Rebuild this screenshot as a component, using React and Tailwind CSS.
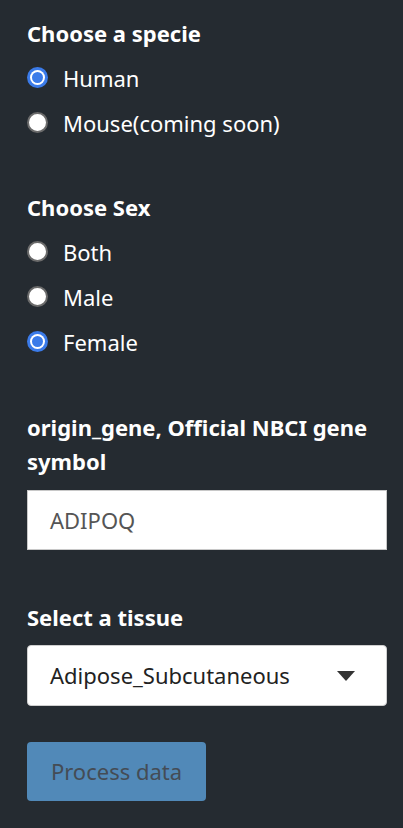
import React from "react";

function Radio({ checked, label }) {
  return (
    <div className="flex items-center h-[45px]">
      {checked ? (
        <span className="w-[21px] h-[21px] rounded-full bg-[#3b7be9] flex items-center justify-center shrink-0">
          <span className="w-[15px] h-[15px] rounded-full bg-white flex items-center justify-center">
            <span className="w-[11px] h-[11px] rounded-full bg-[#3b7be9]" />
          </span>
        </span>
      ) : (
        <span className="w-[21px] h-[21px] rounded-full bg-white border-2 border-[#6b6b6b] shrink-0" />
      )}
      <span className="ml-[15px] text-white text-[22px] leading-none">{label}</span>
    </div>
  );
}

function Header({ children, className = "" }) {
  return (
    <div className={"text-white font-bold text-[22px] leading-[34px] " + className}>{children}</div>
  );
}

export default function App() {
  return (
    <div
      className="w-[403px] min-h-[828px] bg-[#252b31] pl-[27px] pr-[16px] pt-[16px]"
      style={{ fontFamily: "'Noto Sans', 'Liberation Sans', sans-serif" }}
    >
      <Header>Choose a specie</Header>
      <div className="mt-[5px]">
        <Radio checked label="Human" />
        <Radio label="Mouse(coming soon)" />
      </div>
      <Header className="mt-[45px]">Choose Sex</Header>
      <div className="mt-[5px]">
        <Radio label="Both" />
        <Radio label="Male" />
        <Radio checked label="Female" />
      </div>
      <Header className="mt-[46px]">origin_gene, Official NBCI gene symbol</Header>
      <div className="mt-[12px] w-[360px] h-[60px] bg-white border border-[#c8c8c8] flex items-center pl-[22px] text-[22px] text-[#555555]">
        ADIPOQ
      </div>
      <Header className="mt-[50px]">Select a tissue</Header>
      <div className="mt-[11px] w-[360px] h-[61px] bg-white border border-[#cfcfcf] rounded-[4px] flex items-center justify-between pl-[22px] pr-[31px] text-[22px] text-[#222222]">
        <span>Adipose_Subcutaneous</span>
        <svg width="18" height="10" viewBox="0 0 18 10">
          <polygon points="0,0 18,0 9,10" fill="#333333" />
        </svg>
      </div>
      <div className="mt-[36px] w-[179px] h-[59px] bg-[#5189b8] rounded-[4px] flex items-center justify-center text-[22px] text-[#444c55]">
        Process data
      </div>
    </div>
  );
}
